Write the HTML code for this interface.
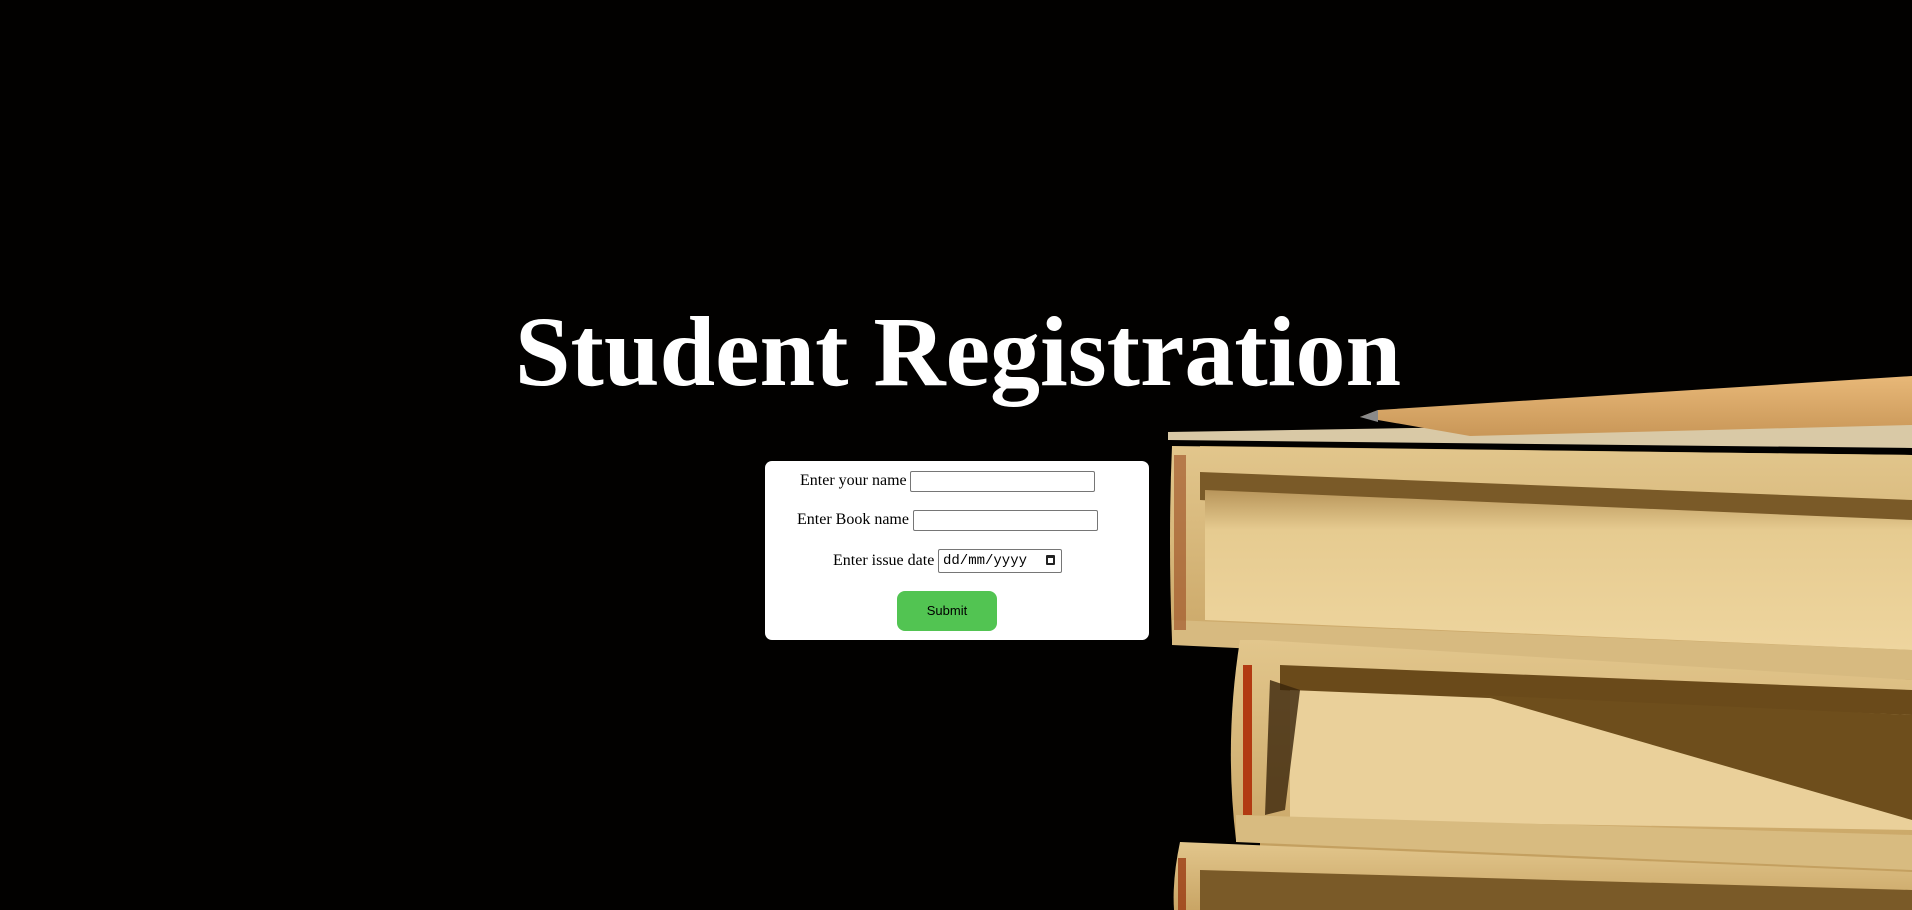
<!DOCTYPE html>
<html><head><meta charset="utf-8"><style>
html,body{margin:0;padding:0;width:1912px;height:910px;overflow:hidden;background:#020100;}
svg.bg{position:absolute;left:0;top:0}
h1{margin:0;text-align:center;font:bold 100px "Liberation Serif",serif;color:#fff;line-height:1;}
.t{position:absolute;left:0;top:302px;width:1916px;text-align:center;}
.box{position:absolute;left:765px;top:461px;width:384px;height:179px;background:#fff;border-radius:7px;}
.lbl{position:absolute;font:16px "Liberation Serif",serif;color:#000;}
.inp{position:absolute;border:1px solid #767676;border-radius:2px;background:#fff;box-sizing:border-box;}
.btn{position:absolute;left:897px;top:591px;width:100px;height:40px;background:#52c452;border-radius:8px;font:13px "Liberation Sans",sans-serif;text-align:center;line-height:40px;color:#000}
</style></head><body>
<svg class="bg" width="1912" height="910" viewBox="0 0 1912 910">
<defs>
<linearGradient id="pg" x1="0" y1="0" x2="0" y2="1"><stop offset="0" stop-color="#b8955a"/><stop offset="0.25" stop-color="#e6cb90"/><stop offset="1" stop-color="#eed59e"/></linearGradient>
<linearGradient id="cv" x1="0" y1="0" x2="0" y2="1"><stop offset="0" stop-color="#e2c68c"/><stop offset="1" stop-color="#c9a565"/></linearGradient>
<linearGradient id="pen" x1="0" y1="0" x2="0" y2="1"><stop offset="0" stop-color="#e8b878"/><stop offset="1" stop-color="#c99758"/></linearGradient>
</defs>
<polygon points="1200,446 1912,455 1912,910 1260,910 1260,640 1200,640" fill="#c4a060"/>
<polygon points="1168,432 1912,420 1912,448 1168,440" fill="#d9c9a6"/>
<polygon points="1360,417 1378,410 1912,376 1912,425 1470,436 1378,420" fill="url(#pen)"/>
<polygon points="1360,417 1378,410 1378,422" fill="#8a8a8a"/>
<path d="M1172,446 Q1168,540 1172,640 L1912,665 L1912,455 Z" fill="url(#cv)"/>
<polygon points="1200,472 1912,500 1912,535 1200,500" fill="#7a5a28"/>
<polygon points="1205,490 1912,520 1912,650 1205,620" fill="url(#pg)"/>
<polygon points="1172,620 1912,650 1912,680 1172,645" fill="#d7ba80"/>
<rect x="1174" y="455" width="12" height="175" fill="#9a4a20" opacity="0.6"/>
<path d="M1240,640 Q1224,740 1236,840 L1912,862 L1912,680 L1260,640 Z" fill="url(#cv)"/>
<polygon points="1280,665 1912,690 1912,720 1280,690" fill="#6a4a1a"/>
<polygon points="1290,690 1912,715 1912,830 1290,820" fill="#ead09a"/>
<polygon points="1480,695 1912,715 1912,820" fill="#6e4e1c"/>
<polygon points="1270,680 1300,690 1285,810 1265,815" fill="#3a240a" opacity="0.8"/>
<rect x="1243" y="665" width="9" height="150" fill="#b23a12"/>
<polygon points="1236,815 1912,835 1912,870 1236,842" fill="#d8bb80"/>
<path d="M1180,842 Q1172,880 1174,910 L1912,910 L1912,872 Z" fill="url(#cv)"/>
<polygon points="1200,870 1912,890 1912,910 1200,910" fill="#7a5a28"/>
<rect x="1178" y="858" width="8" height="52" fill="#9a3a12" opacity="0.8"/>
</svg>
<div class="t"><h1>Student Registration</h1></div>
<div class="box"></div>
<div class="lbl" style="left:800px;top:472px">Enter your name</div>
<div class="inp" style="left:910px;top:471px;width:185px;height:21px"></div>
<div class="lbl" style="left:797px;top:511px">Enter Book name</div>
<div class="inp" style="left:913px;top:510px;width:185px;height:21px"></div>
<div class="lbl" style="left:833px;top:552px">Enter issue date</div>
<div class="inp" style="left:938px;top:549px;width:124px;height:24px;font:14px 'Liberation Mono',monospace;padding:3px 0 0 4px">dd/mm/yyyy<span style="position:absolute;right:6px;top:5px;width:9px;height:10px;border:2px solid #222;border-top-width:3px;border-radius:1px;box-sizing:border-box"></span></div>
<div class="btn">Submit</div>
</body></html>
